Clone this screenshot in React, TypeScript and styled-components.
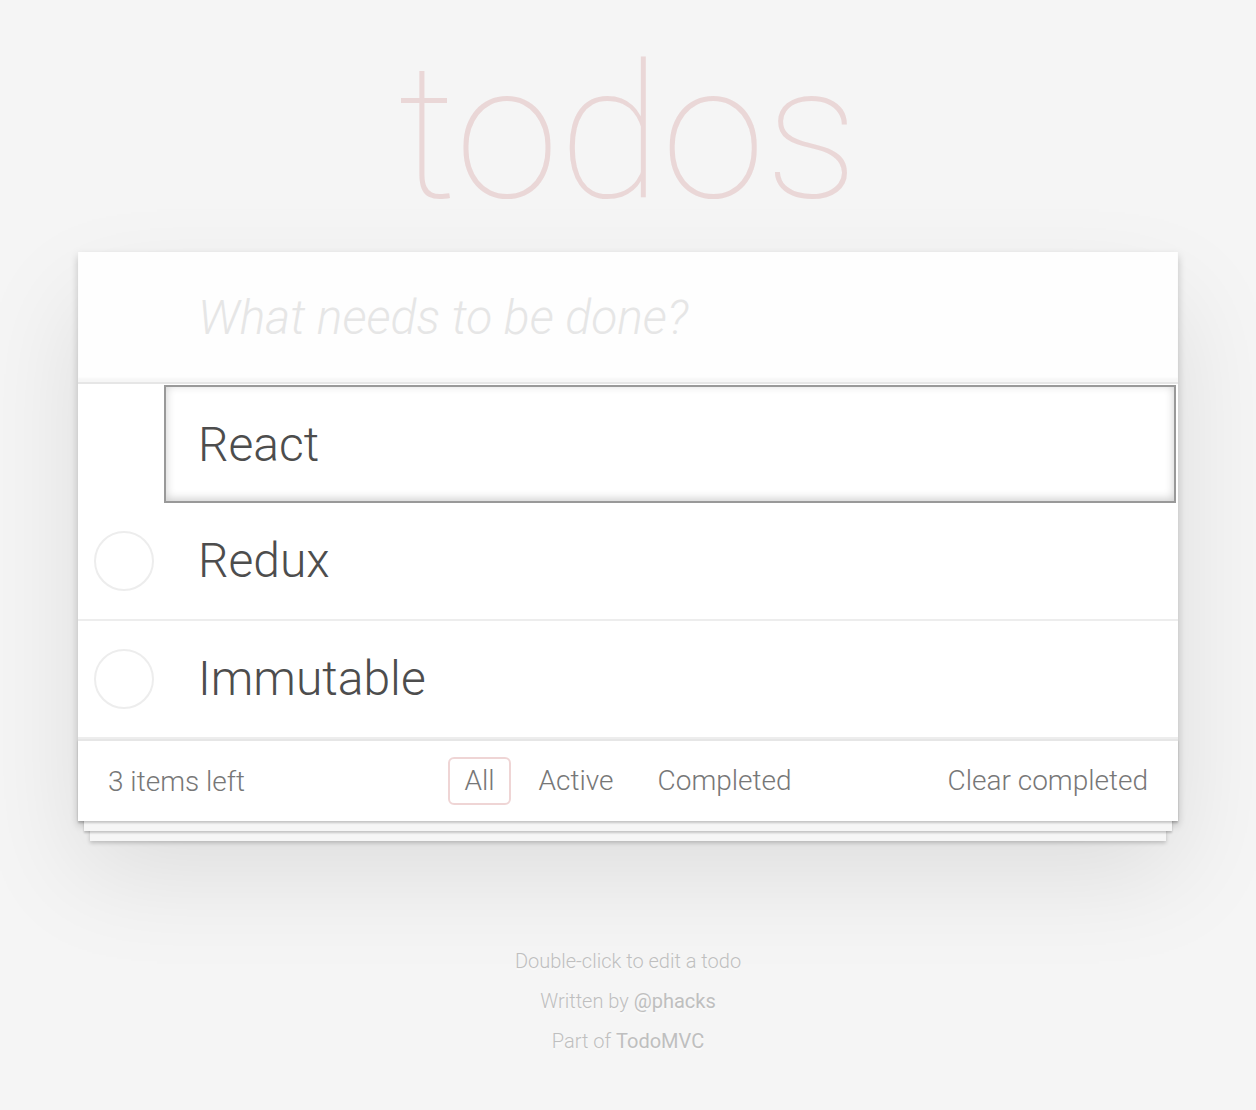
import React from 'react'
import styled, { createGlobalStyle } from 'styled-components'

const GlobalStyle = createGlobalStyle`
  html, body {
    margin: 0;
    padding: 0;
  }
  body {
    background: #f5f5f5;
    color: #4d4d4d;
    font-family: Roboto, 'Liberation Sans', sans-serif;
    font-weight: 300;
    font-size: 28px;
    line-height: 39px;
    -webkit-font-smoothing: antialiased;
  }
  * {
    box-sizing: border-box;
  }
`

const Page = styled.div`
  width: 1100px;
  margin: 0 auto;
`

const Title = styled.h1`
  margin: 33px 0 19px;
  height: 200px;
  font-size: 188px;
  line-height: 200px;
  font-weight: 100;
  text-align: center;
  color: rgba(175, 47, 47, 0.15);
  text-rendering: optimizeLegibility;
`

const Card = styled.section`
  background: #fff;
  box-shadow: 0 4px 8px 0 rgba(0, 0, 0, 0.2), 0 50px 100px 0 rgba(0, 0, 0, 0.1);
`

const NewTodo = styled.input`
  display: block;
  width: 100%;
  margin: 0;
  padding: 32px 32px 32px 120px;
  height: 130px;
  border: none;
  outline: none;
  font-family: inherit;
  font-size: 48px;
  font-weight: 300;
  color: #4d4d4d;
  background: rgba(0, 0, 0, 0.003);
  box-shadow: inset 0 -4px 2px rgba(0, 0, 0, 0.03);

  &::placeholder {
    font-style: italic;
    font-weight: 300;
    color: #e6e6e6;
  }
`

const Main = styled.section`
  border-top: 2px solid #e6e6e6;
`

const List = styled.ul`
  margin: 0;
  padding: 0;
  list-style: none;
`

const Item = styled.li<{ $editing?: boolean }>`
  display: flex;
  align-items: center;
  font-size: 48px;
  border-bottom: ${({ $editing }) => ($editing ? 'none' : '2px solid #ededed')};
  padding: ${({ $editing }) => ($editing ? '1px 2px 0 86px' : '0')};
`

const EditInput = styled.input`
  display: block;
  width: 1012px;
  height: 118px;
  margin: 0;
  padding: 24px 32px;
  border: 2px solid #999;
  outline: none;
  font-family: inherit;
  font-size: 48px;
  font-weight: 300;
  color: #4d4d4d;
  background: #fff;
  box-shadow: inset 0 -2px 10px 0 rgba(0, 0, 0, 0.2);
`

const ToggleBox = styled.div`
  width: 92px;
  flex: none;
  display: flex;
  justify-content: center;
  align-items: center;
`

const Circle = styled.span`
  display: block;
  width: 60px;
  height: 60px;
  border-radius: 50%;
  border: 2px solid #ededed;
`

const Label = styled.label`
  display: block;
  padding: 30px 120px 30px 28px;
  line-height: 56px;
  color: #4d4d4d;
  white-space: pre-line;
`

const Footer = styled.footer`
  display: grid;
  grid-template-columns: 1fr auto 1fr;
  align-items: center;
  height: 82px;
  padding: 16px 30px 24px;
  color: #777;
  background: #fff;
  border-top: 2px solid #e6e6e6;
  box-shadow: 0 2px 2px rgba(0, 0, 0, 0.2), 0 16px 0 -6px #f6f6f6,
    0 18px 2px -6px rgba(0, 0, 0, 0.2), 0 32px 0 -12px #f6f6f6,
    0 34px 4px -12px rgba(0, 0, 0, 0.2);
`

const Count = styled.span`
  text-align: left;
`

const Filters = styled.ul`
  display: flex;
  margin: 0;
  padding: 0;
  list-style: none;
`

const FilterLink = styled.a<{ $selected?: boolean }>`
  display: block;
  margin: 0 6px;
  padding: 4px 14px;
  line-height: 36px;
  color: inherit;
  text-decoration: none;
  border: 2px solid ${({ $selected }) => ($selected ? 'rgba(175, 47, 47, 0.2)' : 'transparent')};
  border-radius: 6px;
`

const Clear = styled.button`
  justify-self: end;
  padding: 0;
  border: none;
  background: none;
  font: inherit;
  color: inherit;
  line-height: 40px;
  cursor: pointer;
`

const Info = styled.footer`
  margin: 130px auto 0;
  color: #bfbfbf;
  font-size: 20px;
  text-shadow: 0 2px 0 rgba(255, 255, 255, 0.5);
  text-align: center;

  p {
    margin: 20px 0;
    line-height: 20px;
  }
`

const InfoLink = styled.a`
  color: inherit;
  text-decoration: none;
  font-weight: 400;
`

const todos = [
  { id: 1, text: 'React', editing: true },
  { id: 2, text: 'Redux' },
  { id: 3, text: 'Immutable' },
]

const filters = ['All', 'Active', 'Completed']

export default function App() {
  return (
    <>
      <GlobalStyle />
      <Page>
        <Title>todos</Title>
        <Card>
          <NewTodo placeholder="What needs to be done?" />
          <Main>
            <List>
              {todos.map((todo) =>
                todo.editing ? (
                  <Item key={todo.id} $editing>
                    <EditInput defaultValue={todo.text} />
                  </Item>
                ) : (
                  <Item key={todo.id}>
                    <ToggleBox>
                      <Circle />
                    </ToggleBox>
                    <Label>{todo.text}</Label>
                  </Item>
                )
              )}
            </List>
          </Main>
          <Footer>
            <Count>3 items left</Count>
            <Filters>
              {filters.map((f) => (
                <li key={f}>
                  <FilterLink href="#" $selected={f === 'All'}>
                    {f}
                  </FilterLink>
                </li>
              ))}
            </Filters>
            <Clear>Clear completed</Clear>
          </Footer>
        </Card>
        <Info>
          <p>Double-click to edit a todo</p>
          <p>
            Written by <InfoLink href="#">@phacks</InfoLink>
          </p>
          <p>
            Part of <InfoLink href="#">TodoMVC</InfoLink>
          </p>
        </Info>
      </Page>
    </>
  )
}
